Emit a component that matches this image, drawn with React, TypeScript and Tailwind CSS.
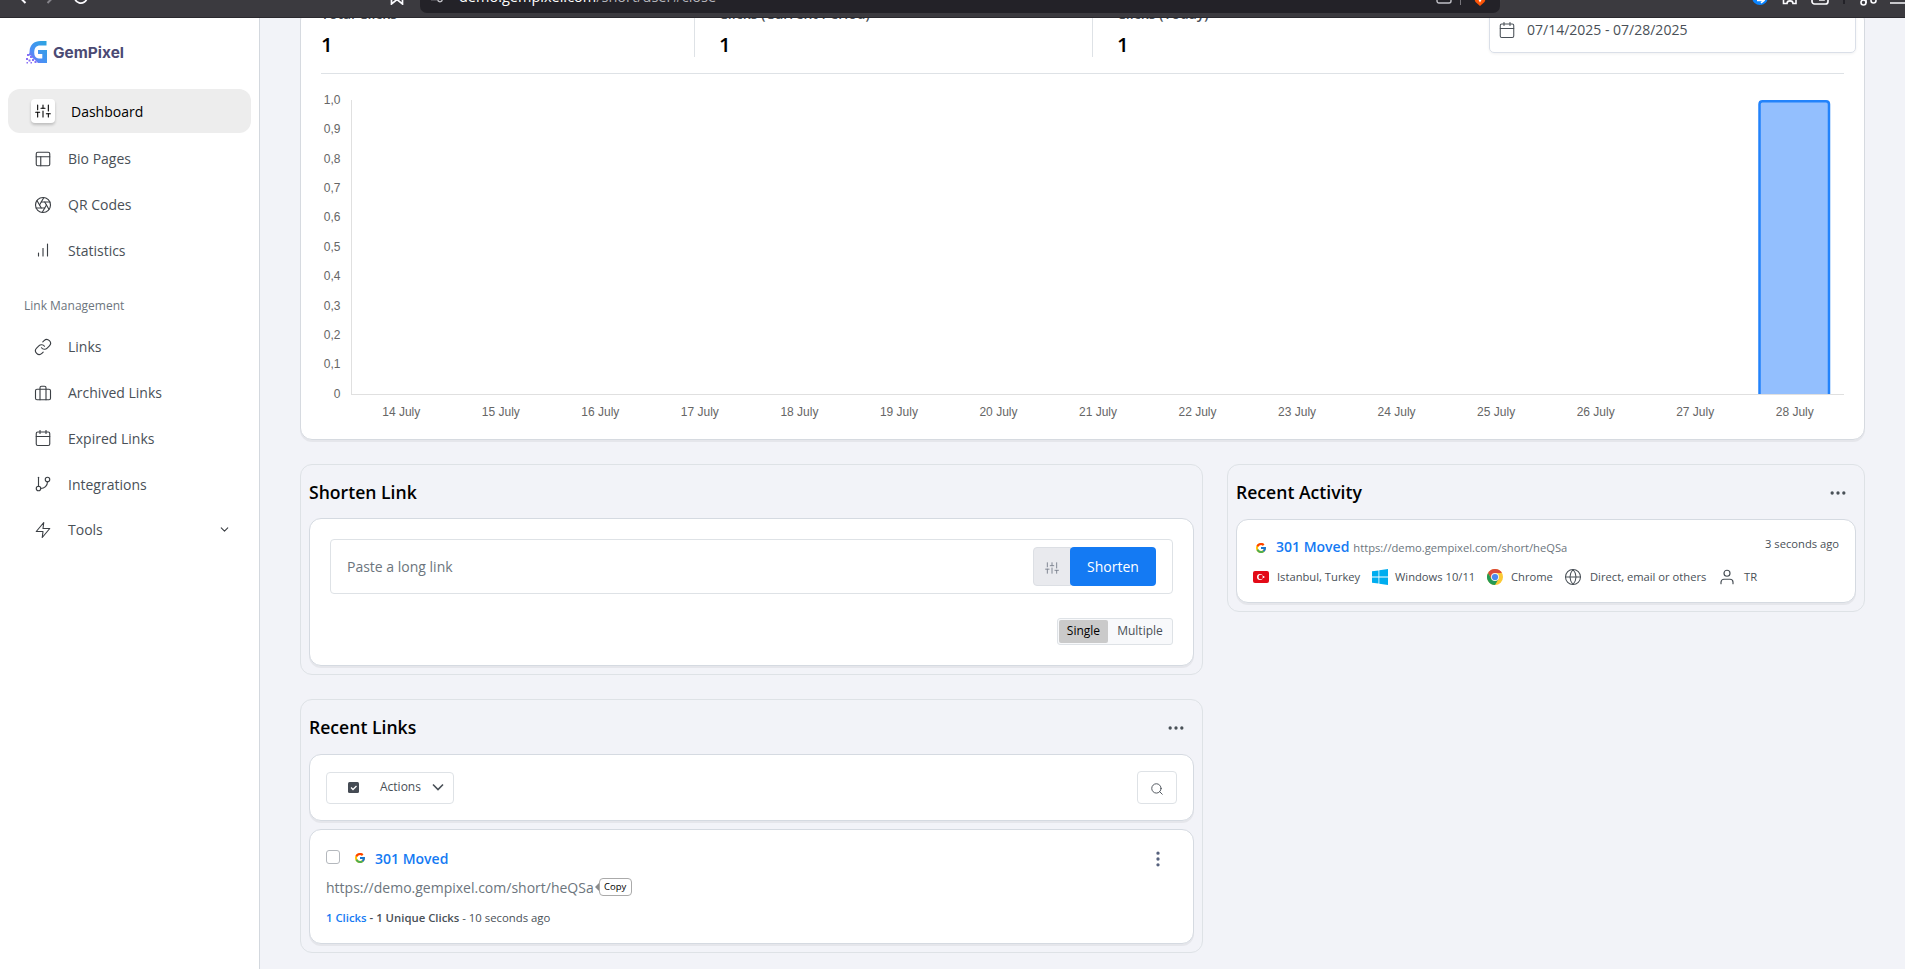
import type { ReactNode } from "react";
import type { IconType } from "react-icons";
import {
    FiAperture, FiBarChart, FiBriefcase, FiCalendar, FiChevronDown, FiGitBranch, FiGlobe,
    FiLayout, FiLink, FiMoreHorizontal, FiMoreVertical, FiSearch, FiSliders, FiUser, FiZap,
} from "react-icons/fi";
import { FcGoogle } from "react-icons/fc";

const MAIN_NAV: { label: string; icon: IconType }[] = [
    { label: "Bio Pages", icon: FiLayout },
    { label: "QR Codes", icon: FiAperture },
    { label: "Statistics", icon: FiBarChart },
];

const LINK_NAV: { label: string; icon: IconType }[] = [
    { label: "Links", icon: FiLink },
    { label: "Archived Links", icon: FiBriefcase },
    { label: "Expired Links", icon: FiCalendar },
    { label: "Integrations", icon: FiGitBranch },
    { label: "Tools", icon: FiZap },
];

const DAYS = [14, 15, 16, 17, 18, 19, 20, 21, 22, 23, 24, 25, 26, 27, 28];
const TICKS = ["1,0", "0,9", "0,8", "0,7", "0,6", "0,5", "0,4", "0,3", "0,2", "0,1", "0"];

function BrowserBar() {
    return (
        <header className="h-[18px] shrink-0 overflow-hidden bg-[#3b3a3f] border-b border-[#2a292e] text-[#fbfbfe]">
            <div className="flex h-[31px] -mt-[18px]">
                <div className="w-[420px] flex pl-[17px]">
                    <svg className="w-[10px] h-[14px] mt-[8px]" viewBox="0 0 10 14" fill="none" stroke="currentColor" strokeWidth="2"><path d="M8.5 1 2.5 7l6 6" /></svg>
                    <svg className="w-[10px] h-[14px] mt-[8px] ml-[19px] text-[#85848a]" viewBox="0 0 10 14" fill="none" stroke="currentColor" strokeWidth="2"><path d="m1.5 1 6 6-6 6" /></svg>
                    <svg className="w-[16px] h-[16px] mt-[7px] ml-[17px]" viewBox="0 0 16 16" fill="none" stroke="currentColor" strokeWidth="1.8"><path d="M14 8.5A6.2 6.2 0 1 1 11.5 3" /></svg>
                    <svg className="w-[14px] h-[16px] mt-[7px] ml-[301px]" viewBox="0 0 14 16" fill="none" stroke="currentColor" strokeWidth="1.7"><path d="M1.5 1h11v14L7 10.5 1.5 15z" /></svg>
                </div>
                <div className="w-[1080px] rounded-b-[7px] bg-[#232228] flex">
                    <svg className="w-[12px] h-[12px] mt-[9px] ml-[11px] text-[#c0c0c6]" viewBox="0 0 12 12" fill="none" stroke="currentColor" strokeWidth="1.5"><path d="M0 8.5h6M6 3h6" /><circle cx="9" cy="8.5" r="2.2" /></svg>
                    <div className="ml-[16px] mt-[5px] w-[977px] text-[14.5px] leading-[20px] text-[#b4b4ba] whitespace-nowrap">
                        <span className="text-white">demo.gempixel.com</span>/short/user#close
                    </div>
                    <svg className="w-[16px] h-[14px] mt-[8px]" viewBox="0 0 16 14" fill="none" stroke="#c0c0c6" strokeWidth="1.4"><rect x="1" y="1" width="14" height="12" rx="2" /><path d="M4 9h5" /></svg>
                    <div className="w-px h-[16px] mt-[7px] ml-[8px] bg-[#77767c]" />
                    <svg className="w-[14px] h-[16px] mt-[8px] ml-[12px]" viewBox="0 0 14 16"><path d="M1 0h12l1 6-2.500 6L7 16l-4.500-4L0 6z" fill="#fb5407" /><path d="M5 9h4l-2 3.500z" fill="#fff" /></svg>
                </div>
                <div className="flex flex-1 pl-[252px]">
                    <svg className="w-[16px] h-[16px] mt-[7px] shrink-0" viewBox="0 0 16 16"><circle cx="8" cy="8" r="8" fill="#0a84ff" /><path d="M5 11.500h6M9 9l3 2.500-3 2.500" stroke="#fff" strokeWidth="1.600" fill="none" /></svg>
                    <svg className="w-[16px] h-[16px] mt-[7px] ml-[14px] shrink-0" viewBox="0 0 16 16" fill="none" stroke="currentColor" strokeWidth="1.6"><path d="M1 8h2V4h10v4h2M1.500 9v5.500H5c0-3.500 6-3.500 6 0h3V9" /></svg>
                    <svg className="w-[18px] h-[16px] mt-[7px] ml-[13px] shrink-0" viewBox="0 0 18 16" fill="none" stroke="currentColor" strokeWidth="1.7"><rect x="1" y="1" width="16" height="14" rx="2.500" /><path d="M8 11h5V8" /></svg>
                    <div className="w-[2px] h-[15px] mt-[7px] ml-[14px] bg-[#232228] shrink-0" />
                    <svg className="w-[17px] h-[18px] mt-[6px] ml-[15px] shrink-0" viewBox="0 0 17 18" fill="none" stroke="currentColor" strokeWidth="1.600"><circle cx="3.500" cy="14.500" r="2.500" /><circle cx="13.500" cy="12.500" r="2.500" /><path d="M6 15V2" /></svg>
                    <div className="w-[15px] h-[2px] mt-[20px] ml-[13px] bg-[#c8c8cc] shrink-0" />
                </div>
            </div>
        </header>
    );
}

function Logo() {
    return (
        <div className="flex items-center mt-[21px] ml-[26px] h-[26px]">
            <svg width="98" height="26" viewBox="0 0 98 26">
                <defs>
                    <linearGradient id="gem" x1="1" y1="0" x2="0" y2="1">
                        <stop offset="0" stopColor="#2aa6de" />
                        <stop offset="0.6" stopColor="#4a90f5" />
                        <stop offset="1" stopColor="#8f63f5" />
                    </linearGradient>
                </defs>
                <path d="M20.500 2h-6C8 2 3.800 6 3.600 12c0 2-.6 3.500-1.600 4.500h3L6.500 19l2 1.500L12 24h9V11h-9v4h4.300v4.400h-3.500c-3 0-4.600-2-4.600-5.800 0-4.400 2-7 6-7h6.300z" fill="url(#gem)" />
                <path d="M1 15h2v2H1zM4 17h2v2H4zM0 19h2v2H0zM6 20h2v2H6zM2.500 20.500h2v2h-2zM8.500 22h2v2h-2zM4.500 23h1.500v1.500H4.500zM0.500 23h1.500v1.500H.5z" fill="#8a70f5" />
                <text x="27" y="19" textLength="71" lengthAdjust="spacingAndGlyphs" className="font-[Inter] text-[15px] font-bold" fill="#4b4a74">GemPixel</text>
            </svg>
        </div>
    );
}

function NavItem({ label, icon: Icon }: { label: string; icon: IconType }) {
    return (
        <a className="flex items-center h-[45.8px] pl-[34px] pr-[28px] text-[14px] text-[#495057]">
            <Icon size={18} strokeWidth={1.5} className="text-[#3b3f44]" />
            <span className="ml-[16px]">{label}</span>
            {label === "Tools" && <FiChevronDown size={13} className="ml-auto text-[#3b3f44]" />}
        </a>
    );
}

function Sidebar() {
    return (
        <aside className="w-[260px] shrink-0 bg-white border-r border-[#d3d8de]">
            <Logo />
            <nav className="mt-[24px]">
                <a className="flex items-center h-[44px] mx-[8px] mb-[3px] pl-[23px] rounded-xl bg-[#ededed] text-[14px] text-black">
                    <span className="size-[24px] rounded-[4px] bg-white shadow-[0_2px_3px_rgba(0,0,0,0.2)] flex items-center justify-center">
                        <FiSliders size={16} strokeWidth={1.6} />
                    </span>
                    <span className="ml-[16px]">Dashboard</span>
                </a>
                {MAIN_NAV.map((item) => <NavItem key={item.label} {...item} />)}
                <p className="h-[50.5px] pt-[23px] pl-[24px] text-[12px] leading-[20px] text-[#6c757d]">Link Management</p>
                {LINK_NAV.map((item) => <NavItem key={item.label} {...item} />)}
            </nav>
        </aside>
    );
}

function Stat({ label, border }: { label: string; border?: boolean }) {
    return (
        <div className={`w-[398px] h-[48px] pl-[24px] ${border ? "border-r border-[#dee2e6]" : ""}`}>
            <p className="-mt-[4px] text-[14px] leading-[18px] font-semibold text-[#495057]">{label}</p>
            <p className="mt-[7px] text-[20.5px] leading-[28px] font-semibold text-black">1</p>
        </div>
    );
}

function ClicksChart() {
    const step = 1493 / 15;

    return (
        <svg width="1563" height="365" viewBox="301 74 1563 365" className="block font-['Liberation_Sans',sans-serif] text-[12px]" fill="#666">
            {TICKS.map((t, i) => <text key={t} x="340.500" y={103.7 + i * 29.4} textAnchor="end">{t}</text>)}
            {DAYS.map((d, i) => <text key={d} x={351.5 + step * (i + 0.5)} y="416" textAnchor="middle">{d} July</text>)}
            <path d="M351.500 100v295M351 394.500h1493" stroke="#e0e0e0" fill="none" />
            <path d="M1759.500 394V104.300q0-3 3-3h63.500q3 0 3 3v289.700" fill="#93bffe" stroke="#2383fb" strokeWidth="2.500" />
        </svg>
    );
}

function StatsCard() {
    return (
        <section className="h-[432px] -mt-[10px] flex flex-col bg-white border border-[#d6dae0] rounded-xl shadow-[0_2px_0_rgba(0,0,0,0.05)]">
            <div className="flex h-[64px] shrink-0 -ml-[4px]">
                <Stat label="Total Clicks" border />
                <Stat label="Clicks (Current Period)" border />
                <Stat label="Clicks (Today)" />
                <div className="-ml-[2px] w-[367px] h-[44px] flex items-center pl-[9px] pb-[3px] border border-[#dadfe8] rounded-[5px] shadow-[0_1px_3px_rgba(0,0,0,0.06)] text-[14px] text-[#495057]">
                    <FiCalendar size={18} strokeWidth={1.4} className="-ml-px" />
                    <span className="ml-[11px] pb-px">07/14/2025 - 07/28/2025</span>
                </div>
            </div>
            <div className="mx-[20px] h-px shrink-0 bg-[#dee2e6]" />
            <ClicksChart />
        </section>
    );
}

function Panel({ title, menu, children }: { title: string; menu?: boolean; children: ReactNode }) {
    return (
        <section className="border border-[#dee2e6] rounded-xl px-[8px] pb-[8px]">
            <div className="flex items-center justify-between h-[54px] pr-[8px]">
                <h2 className="text-[17.6px] leading-[18px] font-semibold text-black">{title}</h2>
                {menu && <FiMoreHorizontal size={20} className="text-[#495057] mt-[2px]" />}
            </div>
            {children}
        </section>
    );
}

function Card({ className, children }: { className: string; children: ReactNode }) {
    return (
        <div className={`bg-white border border-[#d5dae1] rounded-xl shadow-[0_2px_0_rgba(0,0,0,0.05)] ${className}`}>
            {children}
        </div>
    );
}

function ShortenLink() {
    return (
        <Panel title="Shorten Link">
            <Card className="h-[148px] -mt-px p-[20px] flex flex-col items-end">
                <div className="w-full h-[55px] border border-[#dee2e6] rounded-[4px] flex items-center pl-[16px] pr-[16px]">
                    <span className="flex-1 text-[14px] text-[#6c757d]">Paste a long link</span>
                    <button className="w-[38px] h-[39px] -mr-px border border-[#dcdfe4] bg-[#e9eaee] rounded-l-[4px] flex items-center justify-center pt-[3px]">
                        <FiSliders size={14} strokeWidth={1.6} className="text-[#7b818e]" />
                    </button>
                    <button className="w-[86px] h-[39px] rounded-[4px] bg-[#147af3] text-white text-[14px]">Shorten</button>
                </div>
                <div className="mt-[24px] w-[116px] h-[27px] border border-[#dee2e6] rounded-[3px] bg-[#f8f9fb] p-px flex text-[12px]">
                    <span className="w-[49px] h-[23px] pb-[2px] bg-[#cacaca] rounded-[2px] text-black flex items-center justify-center">Single</span>
                    <span className="flex-1 pb-[2px] pl-px flex items-center justify-center text-[#495057]">Multiple</span>
                </div>
            </Card>
        </Panel>
    );
}

function RecentLinks() {
    return (
        <Panel title="Recent Links" menu>
            <Card className="h-[67px] px-[16px] pt-[16px] flex justify-between">
                <button className="mt-px w-[128px] h-[32px] border border-[#dee2e6] rounded-[4px] flex items-center pl-[21px] text-[12px] text-[#495057]">
                    <svg className="-mt-px" width="11" height="11" viewBox="0 0 11 11"><rect width="11" height="11" rx="1.500" fill="#454b54" /><path d="m3 5.500 2 2 3.500-3.500" stroke="#fff" strokeWidth="1.300" fill="none" /></svg>
                    <span className="ml-[21px] pb-[2px]">Actions</span>
                    <svg className="ml-[11px] -mt-[2px]" width="12" height="8" viewBox="0 0 12 8" fill="none" stroke="currentColor" strokeWidth="1.600"><path d="m1 1.500 5 5 5-5" /></svg>
                </button>
                <button className="w-[40px] h-[33px] border border-[#dee2e6] rounded-[4px] flex items-center justify-center pt-[3px] text-[#495057]">
                    <FiSearch size={14} strokeWidth={1.600} />
                </button>
            </Card>
            <Card className="h-[115px] mt-[8px] px-[16px] pt-[17px]">
                <div className="flex items-center h-[22px]">
                    <span className="size-[14px] border border-[#b4b8bd] rounded-[3px] -mt-[2px]" />
                    <FcGoogle size={12} className="ml-[14px] -mt-px" />
                    <a className="ml-[9px] text-[14px] font-semibold text-[#147af3]">301 Moved</a>
                    <FiMoreVertical size={20} className="ml-auto mr-[9px] mt-[2px] text-[#56617d]" />
                </div>
                <div className="flex items-center h-[22px] mt-[7px]">
                    <span className="text-[14px] text-[#6c757d]">https://demo.gempixel.com/short/heQSa</span>
                    <svg className="ml-px" width="4" height="8" viewBox="0 0 4 8"><path d="M4 0v8L0 4z" fill="#8b8b8b" /></svg>
                    <span className="w-[33px] h-[18px] border border-[#aaa] rounded-[4px] flex items-center justify-center text-[9.500px] text-black">Copy</span>
                </div>
                <p className="mt-[11px] text-[11.35px] leading-[18px] text-[#495057] whitespace-nowrap">
                    <span className="font-semibold"><span className="text-[#147af3]">1 Clicks</span> - 1 Unique Clicks</span> - 10 seconds ago
                </p>
            </Card>
        </Panel>
    );
}

function Chrome() {
    return (
        <svg width="16" height="16" viewBox="0 0 16 16">
            <circle cx="8" cy="8" r="8" fill="#fcc934" />
            <path d="M1.070 4A8 8 0 0 1 14.930 4H8L4.500 10z" fill="#db4a3c" />
            <path d="M1.070 4A8 8 0 0 0 8 16l3.500-6H4.500z" fill="#249a53" />
            <circle cx="8" cy="8" r="4" fill="#f4f4f4" />
            <circle cx="8" cy="8" r="3.100" fill="#4a88f0" />
        </svg>
    );
}

function RecentActivity() {
    return (
        <Panel title="Recent Activity" menu>
            <Card className="h-[84px] px-[16px] pt-[16px] whitespace-nowrap text-[11.2px] text-[#495057]">
                <div className="flex h-[22px]">
                    <FcGoogle size={12} className="mt-[6px] ml-[2px]" />
                    <div className="ml-[9px] -mt-px flex items-baseline">
                        <a className="text-[14px] leading-[23px] font-semibold text-[#147af3]">301 Moved</a>
                        <span className="ml-[4px] text-[#6c757d]">https://demo.gempixel.com/short/heQSa</span>
                    </div>
                    <span className="ml-auto leading-[16px]">3 seconds ago</span>
                </div>
                <div className="flex items-center h-[16px] mt-[11px]">
                    <svg width="16" height="12" viewBox="0 0 16 12"><rect width="16" height="12" rx="2" fill="#e30a17" /><circle cx="7" cy="6" r="3" fill="#fff" /><circle cx="7.800" cy="6" r="2.300" fill="#e30a17" /><circle cx="10.500" cy="6" r="1" fill="#fff" /></svg>
                    <span className="ml-[8px] w-[95px]">Istanbul, Turkey</span>
                    <svg width="16" height="16" viewBox="0 0 16 16" fill="#00adef"><path d="M0 2.300 6.500 1.400v6.200H0zM7.300 1.300 16 0v7.600H7.300zM0 8.400h6.500v6.200L0 13.700zM7.300 8.400H16V16l-8.700-1.200z" /></svg>
                    <span className="ml-[7px] w-[92px]">Windows 10/11</span>
                    <Chrome />
                    <span className="ml-[8px] w-[53px]">Chrome</span>
                    <FiGlobe size={18} strokeWidth={1.400} />
                    <span className="ml-[8px] w-[129px]">Direct, email or others</span>
                    <FiUser size={18} strokeWidth={1.600} className="-ml-px" />
                    <span className="ml-[8px]">TR</span>
                </div>
            </Card>
        </Panel>
    );
}

export default function App() {
    return (
        <div className="w-[1905px] h-[969px] overflow-hidden flex flex-col bg-[#f2f3f8] font-['Open_Sans','Noto_Sans',sans-serif]">
            <BrowserBar />
            <div className="flex flex-1 min-h-0">
                <Sidebar />
                <main className="flex-1 px-[40px] overflow-hidden">
                    <StatsCard />
                    <div className="flex items-start gap-[24px] mt-[24px]">
                        <div className="w-[903px] flex flex-col gap-[24px]">
                            <ShortenLink />
                            <RecentLinks />
                        </div>
                        <div className="w-[638px]">
                            <RecentActivity />
                        </div>
                    </div>
                </main>
            </div>
        </div>
    );
}
